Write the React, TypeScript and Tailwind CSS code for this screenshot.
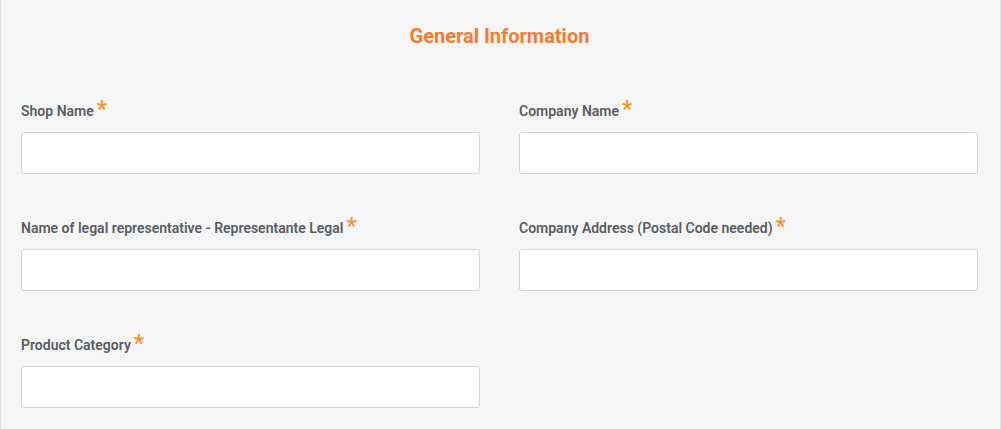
const fields = [
  'Shop Name',
  'Company Name',
  'Name of legal representative - Representante Legal',
  'Company Address (Postal Code needed)',
  'Product Category',
];

function Field({ label }: { label: string }) {
  return (
    <div>
      <label className="block h-5 mb-[11px] text-[14px] leading-5 font-semibold text-[#595d64]">
        {label}
        <span className="relative top-[1px] ml-[3px] text-[23px] leading-[0] font-medium text-[#f7912a]">*</span>
      </label>
      <input
        type="text"
        className="block w-full h-[42px] bg-white border border-[#d5d5d5] rounded-[3px] outline-none px-3 text-sm"
      />
    </div>
  );
}

export default function App() {
  return (
    <div
      className="h-[429px] overflow-hidden bg-[#f6f6f6] border-x border-[#e4e4e4] pl-5 pr-[22px] pt-6"
      style={{ fontFamily: 'Roboto, "Liberation Sans", sans-serif' }}
    >
      <h2 className="text-center text-[20px] leading-6 font-bold text-[#f47c32]">
        General Information
      </h2>
      <div className="grid grid-cols-2 gap-x-[39px] gap-y-[44px] mt-[53px]">
        {fields.map((f) => (
          <Field key={f} label={f} />
        ))}
      </div>
    </div>
  );
}
